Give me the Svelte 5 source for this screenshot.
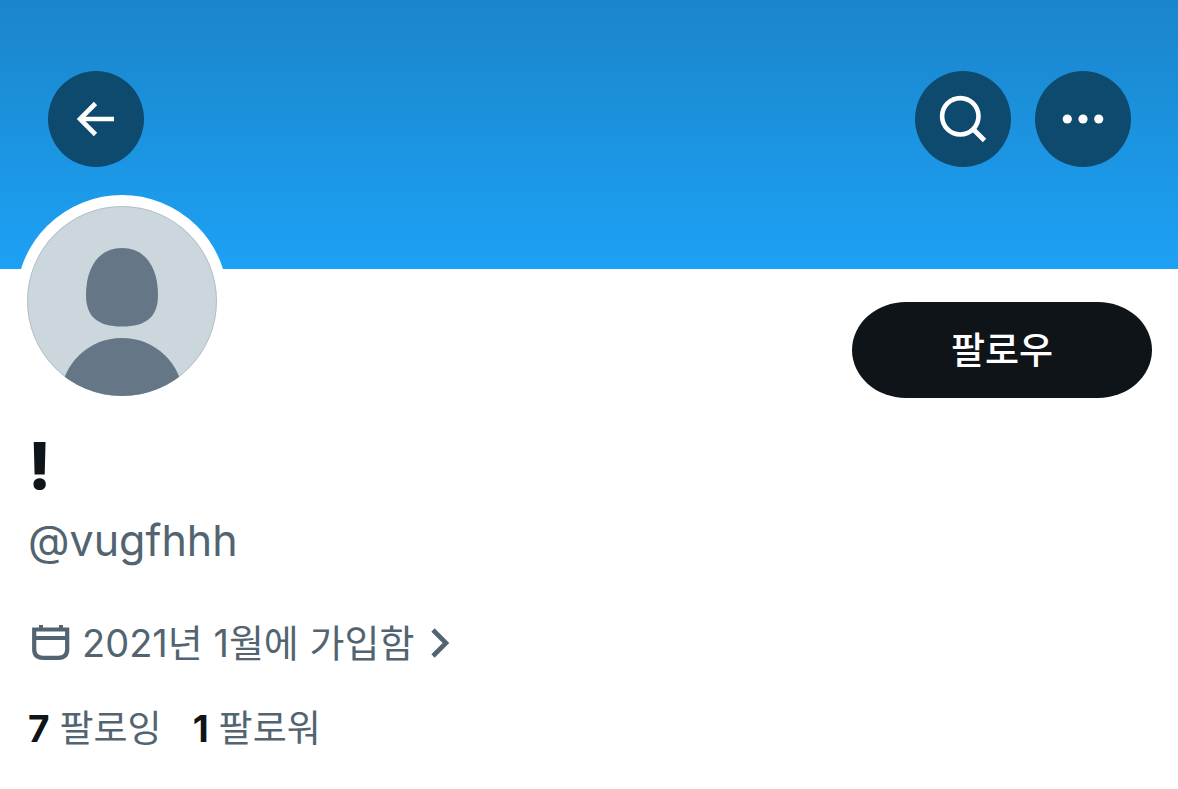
<script lang="ts">
	const profile = {
		name: '!',
		handle: '@vugfhhh',
		joined: '2021년 1월에 가입함'
	};

	const stats = [
		{ count: 7, label: '팔로잉' },
		{ count: 1, label: '팔로워' }
	];
</script>

<div class="page">
	<header class="banner">
		<button class="round-btn" aria-label="뒤로">
			<svg viewBox="0 0 96 96" fill="none" stroke="#fff">
				<path d="M66 48H32" stroke-width="4.6" />
				<path d="M47.5 32.5L32 48l15.5 15.5" stroke-width="4.6" />
			</svg>
		</button>
		<div class="banner-actions">
			<button class="round-btn" aria-label="검색">
				<svg viewBox="0 0 96 96" fill="none" stroke="#fff">
					<circle cx="45.3" cy="45.3" r="18.2" stroke-width="4.6" />
					<path d="M58 58l11.5 11.5" stroke-width="4.8" />
				</svg>
			</button>
			<button class="round-btn" aria-label="더 보기">
				<svg viewBox="0 0 96 96" fill="#fff">
					<circle cx="32.3" cy="48" r="4.6" />
					<circle cx="48" cy="48" r="4.6" />
					<circle cx="63.7" cy="48" r="4.6" />
				</svg>
			</button>
		</div>
	</header>

	<main class="profile">
		<div class="top-row">
			<div class="avatar">
				<svg viewBox="0 0 190 190" role="img" aria-label="프로필 사진">
					<clipPath id="avatar-clip"><circle cx="95" cy="95" r="95" /></clipPath>
					<g clip-path="url(#avatar-clip)">
						<rect width="190" height="190" fill="#ccd6dd" />
						<path
							d="M95 42C118 42 131 61 131 89C131 111 119 120.5 95 120.5C71 120.5 59 111 59 89C59 61 72 42 95 42Z"
							fill="#657786"
						/>
						<path d="M33 190C36 158 61 132 95 132S154 158 157 190Z" fill="#657786" />
					</g>
					<circle cx="95" cy="95" r="94.5" fill="none" stroke="#657786" stroke-opacity=".25" />
				</svg>
			</div>
			<button class="follow-btn">팔로우</button>
		</div>

		<h1 class="name">{profile.name}</h1>
		<p class="handle">{profile.handle}</p>

		<a class="joined" href="#about">
			<svg class="calendar" viewBox="0 0 44 44" fill="none" stroke="#536471">
				<path d="M6.2 8.500H39.200V28Q39.200 36.800 30.500 36.800H15Q6.200 36.800 6.200 28Z" stroke-width="4.200" />
				<path d="M6.200 17H39.200M13 4v4M33 4v4" stroke-width="4" />
			</svg>
			<span>{profile.joined}</span>
			<svg class="chevron" viewBox="0 0 20 32" fill="none" stroke="#536471">
				<path d="M3 3l13 13L3 29" stroke-width="4.600" />
			</svg>
		</a>

		<div class="stats">
			{#each stats as stat}
				<a class="stat" href="#follow"><strong>{stat.count}</strong><span>{stat.label}</span></a>
			{/each}
		</div>
	</main>
</div>

<style>
	:global(body) {
		margin: 0;
		background: #fff;
	}
	.page {
		font-family: Inter, 'Noto Sans CJK KR', sans-serif;
		color: #0f1419;
	}
	button {
		border: none;
		padding: 0;
		font-family: inherit;
		cursor: pointer;
	}
	a {
		color: inherit;
		text-decoration: none;
	}
	svg {
		display: block;
		flex-shrink: 0;
	}

	/* Banner */
	.banner {
		display: flex;
		justify-content: space-between;
		padding: 71px 47px 102px 48px;
		background: linear-gradient(#1a85ca, #1da1f5);
	}
	.banner-actions {
		display: flex;
		gap: 24px;
	}
	.round-btn {
		width: 96px;
		height: 96px;
		border-radius: 50%;
		background: #0d4a6e;
	}

	/* Profile */
	.profile {
		padding: 0 26px 40px 28px;
	}
	.top-row {
		display: flex;
		justify-content: space-between;
		align-items: flex-start;
	}
	.avatar {
		width: 190px;
		margin: -74px 0 0 -12px;
		border: 11px solid #fff;
		border-radius: 50%;
		background: #fff;
	}
	.follow-btn {
		width: 300px;
		height: 96px;
		margin-top: 33px;
		padding-bottom: 4px;
		border-radius: 54px / 48px;
		background: #0f1419;
		color: #fff;
		font-size: 37px;
		font-weight: 500;
	}
	.name {
		margin: 19px 0 0;
		font-size: 65px;
		font-weight: 800;
		line-height: 80px;
	}
	.handle {
		margin: 6px 0 0;
		font-size: 43px;
		line-height: 56px;
		color: #536471;
	}
	.joined {
		display: flex;
		align-items: center;
		margin-top: 49px;
		font-size: 38px;
		line-height: 52px;
		color: #536471;
	}
	.calendar {
		width: 44px;
		margin-right: 10px;
	}
	.chevron {
		width: 20px;
		margin-left: 16px;
	}
	.stats {
		display: flex;
		gap: 31px;
		margin-top: 34px;
		font-size: 37px;
		line-height: 52px;
	}
	.stat {
		display: flex;
		gap: 10px;
	}
	.stat strong {
		font-weight: 700;
	}
	.stat span {
		color: #536471;
	}
</style>
